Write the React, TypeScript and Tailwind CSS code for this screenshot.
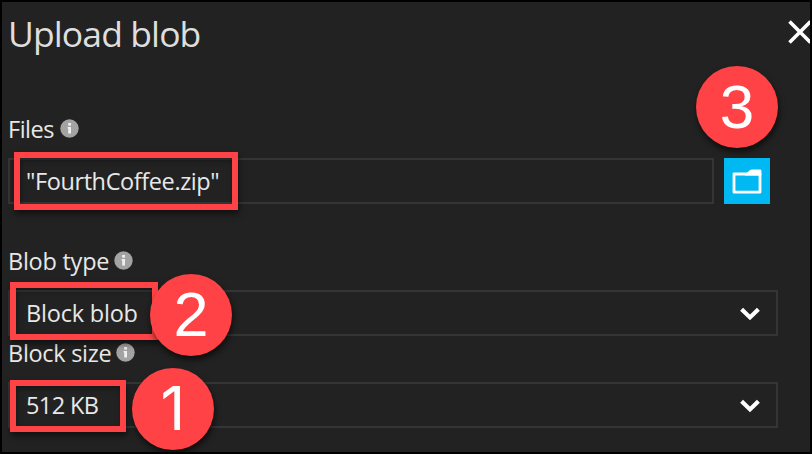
import React from "react";

function Info() {
  return (
    <svg className="-mt-[2px] h-[19px] w-[19px] shrink-0" viewBox="0 0 19 19">
      <circle cx="9.5" cy="9.5" r="9.2" fill="#a3a3a3" />
      <rect x="8.2" y="4" width="2.8" height="2.6" fill="#f0f0f0" />
      <path d="M7.6 8h3.4v6.5H8.2V9.4h-.6z" fill="#f0f0f0" />
    </svg>
  );
}

function Label({ text, width }: { text: string; width: string }) {
  return (
    <div className="flex h-8 items-center">
      <span className={"whitespace-nowrap text-[23.5px] leading-8 " + width}>{text}</span>
      <Info />
    </div>
  );
}

function Chevron() {
  return (
    <svg className="mt-[2px] h-[14px] w-5" viewBox="0 0 20 14" fill="none" stroke="#fff" strokeWidth="4.2">
      <path d="M1.6 2.2 10 10.4 18.4 2.2" />
    </svg>
  );
}

function Select({ text, spacing }: { text: string; spacing: string }) {
  return (
    <div className="flex h-[46px] w-[770px] items-center justify-between border-2 border-[#353535] pl-4 pr-[16px]">
      <span className={"whitespace-nowrap pt-[2px] text-[23.5px] " + spacing}>{text}</span>
      <Chevron />
    </div>
  );
}

function Badge({ n, place }: { n: string; place: string }) {
  return (
    <div
      className={
        "absolute flex h-[82px] w-[82px] items-center justify-center rounded-full bg-[#ff4245] leading-none text-white shadow-[1px_4px_6px_rgba(0,0,0,0.6)] " +
        place
      }
    >
      {n}
    </div>
  );
}

const frame = "absolute border-[6px] border-[#ff4245] shadow-[1px_4px_6px_rgba(0,0,0,0.5),inset_1px_3px_5px_rgba(0,0,0,0.35)] ";

export default function App() {
  return (
    <div className="relative h-[454px] w-[812px] overflow-hidden border-2 border-black bg-[#222222] pl-[6px] font-['Open_Sans','Noto_Sans',sans-serif] text-[#e8e8e8]">
      <header className="flex h-[64px] items-center justify-between">
        <h1 className="-mt-[3px] whitespace-nowrap text-[35.5px] font-normal leading-[64px] tracking-[-0.9px] text-[#dedede]">Upload blob</h1>
        <svg className="-mr-[2px] mt-[-5px] h-6 w-6" viewBox="0 0 24 24" stroke="#fff" strokeWidth="3.6" fill="none">
          <path d="M1.5 1.5 22.5 22.5M22.5 1.5 1.5 22.5" />
        </svg>
      </header>
      <main>
        <section className="pt-[47px]">
          <Label text="Files" width="w-[52px] tracking-[-0.5px]" />
          <div className="mt-[13px] flex gap-[10px]">
            <div className="flex h-[46px] w-[706px] items-center border-2 border-[#353535] pl-4">
              <span className="whitespace-nowrap pt-[2px] text-[23.5px] tracking-[-0.4px]">"FourthCoffee.zip"</span>
            </div>
            <button className="flex h-[46px] w-[46px] items-center justify-center bg-[#00b9f2]">
              <svg className="h-[26px] w-[30px]" viewBox="0 0 30 26">
                <path d="M2 6H28V24.2H2Z" fill="none" stroke="#fff" strokeWidth="2.8" strokeLinejoin="round" />
                <path d="M13 6.5 17.5 2.4Q18.5 1.4 20 1.4H28Q29.4 1.4 29.4 2.8V7.4H13Z" fill="#fff" />
              </svg>
            </button>
          </div>
        </section>
        <section className="pt-[41px]">
          <Label text="Blob type" width="w-[106px] tracking-[-0.25px]" />
          <div className="mt-[13px]">
            <Select text="Block blob" spacing="tracking-[-0.2px]" />
          </div>
        </section>
        <section className="pt-px">
          <Label text="Block size" width="w-[108px] tracking-[-0.3px]" />
          <div className="mt-[13px]">
            <Select text="512 KB" spacing="tracking-[-0.6px]" />
          </div>
        </section>
      </main>
      <div className={frame + "left-[12px] top-[150px] h-[58px] w-[224px]"} />
      <div className={frame + "left-[8px] top-[280px] h-[58px] w-[148px]"} />
      <div className={frame + "left-[8px] top-[378px] h-[52px] w-[116px]"} />
      <Badge n="3" place="left-[694px] top-[64px] font-['Liberation_Sans',sans-serif] text-[62px]" />
      <Badge n="2" place="left-[148px] top-[272px] pb-[2px] font-['Liberation_Sans',sans-serif] text-[63px]" />
      <Badge n="1" place="left-[130px] top-[366px] pb-[2px] font-['Inter',sans-serif] text-[61px]" />
    </div>
  );
}
